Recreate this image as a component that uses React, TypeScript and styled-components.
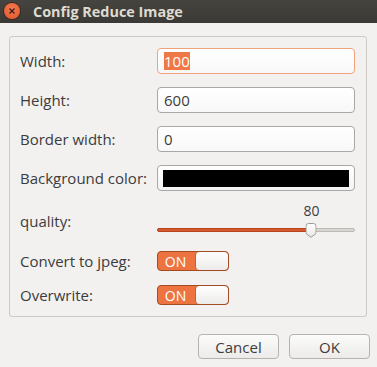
import React from "react";
import styled, { createGlobalStyle } from "styled-components";

const Global = createGlobalStyle`
  html, body { margin: 0; padding: 0; background: #f2f1f0; }
  body { font-family: "Open Sans", "Noto Sans", sans-serif; }
`;

const Window = styled.div`
  width: 377px;
  height: 367px;
  background: #f2f1f0;
  display: flex;
  flex-direction: column;
  overflow: hidden;
`;

const TitleBar = styled.div`
  height: 23px;
  background: linear-gradient(#45443f, #3a3935);
  display: flex;
  align-items: center;
  padding-left: 4px;
  gap: 13px;
`;

const CloseBtn = styled.div`
  width: 16px;
  height: 16px;
  border-radius: 50%;
  background: radial-gradient(circle at 50% 35%, #f47a50, #e0552a);
  box-shadow: 0 0 0 1px #3a2a22;
  display: flex;
  align-items: center;
  justify-content: center;
  margin-top: -2px;
`;

const Title = styled.div`
  color: #dfdbd2;
  font-weight: bold;
  font-size: 14.4px;
`;

const Body = styled.div`
  flex: 1;
  padding: 13px 10px 0 9px;
  display: flex;
  flex-direction: column;
`;

const Frame = styled.div`
  border: 1px solid #cdc9c5;
  border-radius: 3px;
  height: 281px;
  box-sizing: border-box;
  padding: 11px 11px 0 10px;
  display: flex;
  flex-direction: column;
`;

const Row = styled.div<{ $h: number; $mt: number }>`
  display: grid;
  grid-template-columns: 137px 198px;
  align-items: center;
  height: ${(p) => p.$h}px;
  margin-top: ${(p) => p.$mt}px;
`;

const Label = styled.div`
  font-size: 15px;
  color: #3c3c3c;
  white-space: nowrap;
`;

const Input = styled.div<{ $focus?: boolean }>`
  height: 26px;
  box-sizing: border-box;
  border: 1px solid ${(p) => (p.$focus ? "#f0a27f" : "#a9a8a5")};
  border-radius: 4px;
  background: linear-gradient(#ffffff, #f8f8f8);
  display: flex;
  align-items: center;
  padding-left: 6px;
  font-size: 15px;
  color: #3c3c3c;
`;

const Selected = styled.span`
  background: #f07746;
  color: #ffffff;
  line-height: 18px;
`;

const ColorButton = styled.div`
  height: 26px;
  box-sizing: border-box;
  border: 1px solid #a9a8a5;
  border-radius: 4px;
  background: linear-gradient(#ffffff, #f3f3f3);
  padding: 4px 5px 3px 5px;
  display: flex;
`;

const Swatch = styled.div`
  flex: 1;
  background: #000000;
`;

const SliderBox = styled.div`
  height: 100%;
  position: relative;
`;

const SliderValue = styled.div`
  position: absolute;
  top: 0;
  transform: translateX(-50%);
  font-size: 14px;
  color: #3c3c3c;
  line-height: 16px;
`;

const Track = styled.div`
  position: absolute;
  left: 0;
  right: 0;
  top: 25px;
  height: 4px;
  box-sizing: border-box;
  border-radius: 2px;
  background: #d8d6d3;
  border: 1px solid #bcbab6;
`;

const Fill = styled.div`
  position: absolute;
  left: 0;
  top: 25px;
  height: 4px;
  box-sizing: border-box;
  border-radius: 2px;
  background: #d9582a;
  border: 1px solid #b4451f;
`;

const Thumb = styled.svg`
  position: absolute;
  top: 20px;
  transform: translateX(-50%);
`;

const Switch = styled.div`
  width: 72px;
  height: 20px;
  box-sizing: border-box;
  border: 1px solid #a34b23;
  border-radius: 4px;
  background: #ed7441;
  display: flex;
  overflow: hidden;
`;

const SwitchText = styled.div`
  width: 37px;
  color: #ffffff;
  font-size: 14px;
  display: flex;
  align-items: center;
  justify-content: center;
  padding-right: 2px;
  box-sizing: border-box;
`;

const SwitchKnob = styled.div`
  flex: 1;
  background: linear-gradient(#ffffff, #ecebe9);
  border-left: 1px solid #b0683f;
  border-radius: 4px;
`;

const Buttons = styled.div`
  display: flex;
  justify-content: flex-end;
  gap: 10px;
  margin-top: 17px;
  margin-right: -3px;
`;

const Button = styled.div`
  width: 81px;
  height: 25px;
  box-sizing: border-box;
  border: 1px solid #b6b3ae;
  border-radius: 4px;
  background: linear-gradient(#fbfbfa, #ecebe9);
  display: flex;
  align-items: center;
  justify-content: center;
  font-size: 15px;
  color: #3c3c3c;
`;

function Slider({ value }: { value: number }) {
  const pos = (value / 100) * 198 - 4;
  return (
    <SliderBox>
      <SliderValue style={{ left: pos }}>{value}</SliderValue>
      <Track />
      <Fill style={{ width: pos }} />
      <Thumb style={{ left: pos }} width="11" height="15" viewBox="0 0 11 15">
        <defs>
          <linearGradient id="tg" x1="0" y1="0" x2="0" y2="1">
            <stop offset="0" stopColor="#ffffff" />
            <stop offset="1" stopColor="#e8e7e5" />
          </linearGradient>
        </defs>
        <path
          d="M0.5 3 Q0.5 0.5 3 0.5 L8 0.5 Q10.5 0.5 10.5 3 L10.5 10.5 L5.5 14.3 L0.5 10.5 Z"
          fill="url(#tg)"
          stroke="#9d9b97"
        />
      </Thumb>
    </SliderBox>
  );
}

export default function App() {
  return (
    <Window>
      <Global />
      <TitleBar>
        <CloseBtn>
          <svg width="8" height="8" viewBox="0 0 8 8">
            <path d="M1.5 1.5 L6.5 6.5 M6.5 1.5 L1.5 6.5" stroke="#3a2018" strokeWidth="1.4" />
          </svg>
        </CloseBtn>
        <Title>Config Reduce Image</Title>
      </TitleBar>
      <Body>
        <Frame>
          <Row $h={26} $mt={0}>
            <Label>Width:</Label>
            <Input $focus>
              <Selected>100</Selected>
            </Input>
          </Row>
          <Row $h={26} $mt={13}>
            <Label>Height:</Label>
            <Input>600</Input>
          </Row>
          <Row $h={26} $mt={13}>
            <Label>Border width:</Label>
            <Input>0</Input>
          </Row>
          <Row $h={26} $mt={13}>
            <Label>Background color:</Label>
            <ColorButton>
              <Swatch />
            </ColorButton>
          </Row>
          <Row $h={36} $mt={12}>
            <Label>quality:</Label>
            <Slider value={80} />
          </Row>
          <Row $h={20} $mt={12}>
            <Label>Convert to jpeg:</Label>
            <Switch>
              <SwitchText>ON</SwitchText>
              <SwitchKnob />
            </Switch>
          </Row>
          <Row $h={20} $mt={14}>
            <Label>Overwrite:</Label>
            <Switch>
              <SwitchText>ON</SwitchText>
              <SwitchKnob />
            </Switch>
          </Row>
        </Frame>
        <Buttons>
          <Button>Cancel</Button>
          <Button>OK</Button>
        </Buttons>
      </Body>
    </Window>
  );
}
